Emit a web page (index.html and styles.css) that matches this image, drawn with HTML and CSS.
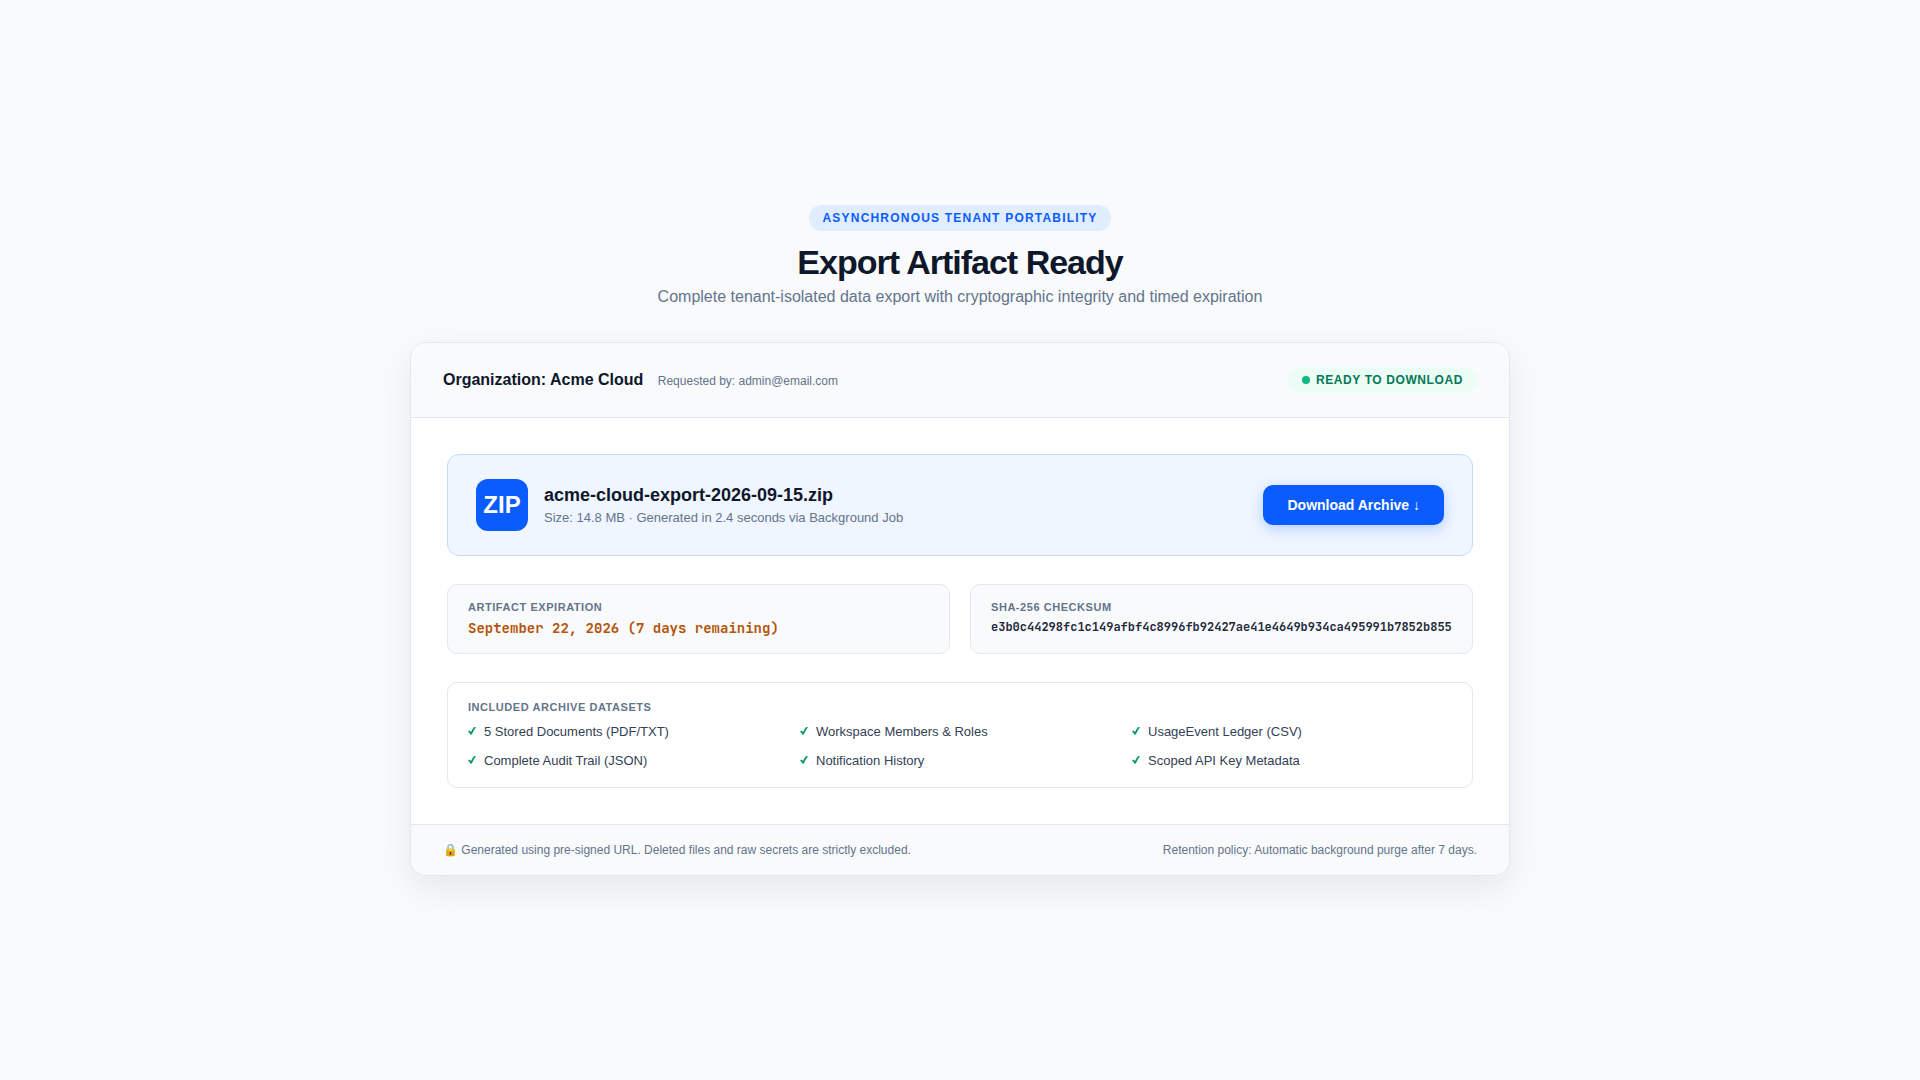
FILE: index.html
```html
<!DOCTYPE html>
<html lang="en">
<head>
<meta charset="utf-8">
<meta name="viewport" content="width=device-width, initial-scale=1">
<title>Export Artifact Ready</title>
<link rel="stylesheet" href="styles.css">
</head>
<body>
<svg width="0" height="0" class="sprite" aria-hidden="true">
  <symbol id="check" viewBox="0 0 8 8">
    <path d="M0 4.4 1.5 3.4 3 5.1C3.900 3 4.900 1.300 6.200 0L8 .3C6.200 2.500 5 4.800 3.900 7.600L2.600 7.700C1.900 6.300 1.100 5.300 0 4.400Z" fill="currentColor"/>
  </symbol>
</svg>
<main class="page">
  <header class="intro">
    <span class="eyebrow">ASYNCHRONOUS TENANT PORTABILITY</span>
    <h1 class="title">Export Artifact Ready</h1>
    <p class="subtitle">Complete tenant-isolated data export with cryptographic integrity and timed expiration</p>
  </header>
  <section class="card">
    <div class="card-header">
      <div class="org">
        <h2 class="org-name">Organization: Acme Cloud</h2>
        <span class="requester">Requested by: admin@email.com</span>
      </div>
      <span class="status"><span class="dot"></span>READY TO DOWNLOAD</span>
    </div>
    <div class="card-body">
      <div class="artifact">
        <div class="file">
          <div class="file-icon">ZIP</div>
          <div class="file-text">
            <h3 class="file-name">acme-cloud-export-2026-09-15.zip</h3>
            <p class="file-meta">Size: 14.8 MB · Generated in 2.4 seconds via Background Job</p>
          </div>
        </div>
        <button type="button" class="download">Download Archive ↓</button>
      </div>
      <dl class="facts">
        <div class="fact">
          <dt class="label">ARTIFACT EXPIRATION</dt>
          <dd class="value value-warn">September 22, 2026 (7 days remaining)</dd>
        </div>
        <div class="fact">
          <dt class="label">SHA-256 CHECKSUM</dt>
          <dd class="value value-hash">e3b0c44298fc1c149afbf4c8996fb92427ae41e4649b934ca495991b7852b855</dd>
        </div>
      </dl>
      <div class="datasets">
        <h3 class="label">INCLUDED ARCHIVE DATASETS</h3>
        <ul class="dataset-list">
          <li class="dataset"><svg class="check" aria-hidden="true"><use href="#check"/></svg>5 Stored Documents (PDF/TXT)</li>
          <li class="dataset"><svg class="check" aria-hidden="true"><use href="#check"/></svg>Workspace Members &amp; Roles</li>
          <li class="dataset"><svg class="check" aria-hidden="true"><use href="#check"/></svg>UsageEvent Ledger (CSV)</li>
          <li class="dataset"><svg class="check" aria-hidden="true"><use href="#check"/></svg>Complete Audit Trail (JSON)</li>
          <li class="dataset"><svg class="check" aria-hidden="true"><use href="#check"/></svg>Notification History</li>
          <li class="dataset"><svg class="check" aria-hidden="true"><use href="#check"/></svg>Scoped API Key Metadata</li>
        </ul>
      </div>
    </div>
    <footer class="card-footer">
      <span>🔒 Generated using pre-signed URL. Deleted files and raw secrets are strictly excluded.</span>
      <span>Retention policy: Automatic background purge after 7 days.</span>
    </footer>
  </section>
</main>
</body>
</html>
```
FILE: styles.css
```css
* {
  box-sizing: border-box;
  margin: 0;
  padding: 0;
}

body {
  min-height: 100vh;
  display: flex;
  align-items: center;
  justify-content: center;
  background: #f8fafc;
  color: #0f172a;
  font-family: "Liberation Sans", Arial, sans-serif;
}

.sprite {
  position: absolute;
}

.page {
  width: 100%;
  max-width: 1100px;
}

.intro {
  display: flex;
  flex-direction: column;
  align-items: center;
  margin-bottom: 36px;
  text-align: center;
}

.eyebrow {
  padding: 6px 14px;
  margin-bottom: 12px;
  border-radius: 20px;
  background: #e0edff;
  color: #0b5cff;
  font-size: 12px;
  font-weight: 700;
  line-height: 14px;
  letter-spacing: 0.1em;
}

.title {
  font-size: 34px;
  font-weight: 800;
  line-height: 39px;
  letter-spacing: -1px;
}

.subtitle {
  margin-top: 6px;
  color: #64748b;
  font-size: 16px;
  line-height: 18px;
}

.card {
  overflow: hidden;
  border: 1px solid #e2e8f0;
  border-radius: 16px;
  background: #fff;
  box-shadow: 0 12px 36px rgba(15, 23, 42, 0.08);
}

.card-header {
  display: flex;
  align-items: center;
  justify-content: space-between;
  padding: 24px 32px;
  border-bottom: 1px solid #e2e8f0;
  background: #f8fafc;
}

.org-name {
  display: inline;
  font-size: 16px;
  line-height: 18px;
}

.requester {
  margin-left: 10px;
  color: #64748b;
  font-size: 12px;
}

.status {
  display: flex;
  align-items: center;
  gap: 6px;
  padding: 6px 14px;
  border-radius: 20px;
  background: #ecfdf5;
  color: #047857;
  font-size: 12px;
  font-weight: 700;
  line-height: 14px;
  letter-spacing: 0.05em;
}

.dot {
  width: 8px;
  height: 8px;
  border-radius: 50%;
  background: #10b981;
}

.card-body {
  display: flex;
  flex-direction: column;
  gap: 28px;
  padding: 36px;
}

.artifact {
  display: flex;
  align-items: center;
  justify-content: space-between;
  padding: 24px 28px;
  border: 1px solid #bfdbfe;
  border-radius: 12px;
  background: #eff6ff;
}

.file {
  display: flex;
  align-items: center;
  gap: 16px;
}

.file-icon {
  display: flex;
  align-items: center;
  justify-content: center;
  width: 52px;
  height: 52px;
  border-radius: 12px;
  background: #0b5cff;
  color: #fff;
  font-size: 24px;
  font-weight: 700;
}

.file-name {
  font-size: 18px;
  line-height: 20px;
}

.file-meta {
  margin-top: 5px;
  color: #64748b;
  font-size: 13px;
  line-height: 15px;
}

.download {
  padding: 12px 24px;
  border: 0;
  border-radius: 10px;
  background: #0b5cff;
  box-shadow: 0 4px 14px rgba(11, 92, 255, 0.25);
  color: #fff;
  font-family: inherit;
  font-size: 14px;
  font-weight: 700;
  line-height: 16px;
  cursor: pointer;
}

.facts {
  display: grid;
  grid-template-columns: repeat(2, minmax(0, 1fr));
  gap: 20px;
}

.fact {
  padding: 16px 20px;
  border: 1px solid #e2e8f0;
  border-radius: 10px;
  background: #f8fafc;
}

.label {
  color: #64748b;
  font-size: 11px;
  font-weight: 700;
  line-height: 12px;
  letter-spacing: 0.05em;
}

.value {
  margin-top: 6px;
  font-family: "JetBrains Mono", "Liberation Mono", monospace;
  font-weight: 600;
}

.value-warn {
  color: #b45309;
  font-size: 14px;
  line-height: 18px;
}

.value-hash {
  color: #1e293b;
  font-size: 12px;
  line-height: 16px;
}

.datasets {
  padding: 18px 20px;
  border: 1px solid #e2e8f0;
  border-radius: 10px;
}

.dataset-list {
  display: grid;
  grid-template-columns: repeat(3, 1fr);
  gap: 12px;
  margin-top: 10px;
  list-style: none;
}

.dataset {
  display: flex;
  align-items: center;
  gap: 8px;
  color: #334155;
  font-size: 13px;
  line-height: 17px;
}

.check {
  flex: none;
  width: 8px;
  height: 8px;
  color: #059669;
}

.card-footer {
  display: flex;
  align-items: center;
  justify-content: space-between;
  padding: 16px 32px;
  border-top: 1px solid #e2e8f0;
  background: #f8fafc;
  color: #64748b;
  font-size: 12px;
  line-height: 18px;
}
```
